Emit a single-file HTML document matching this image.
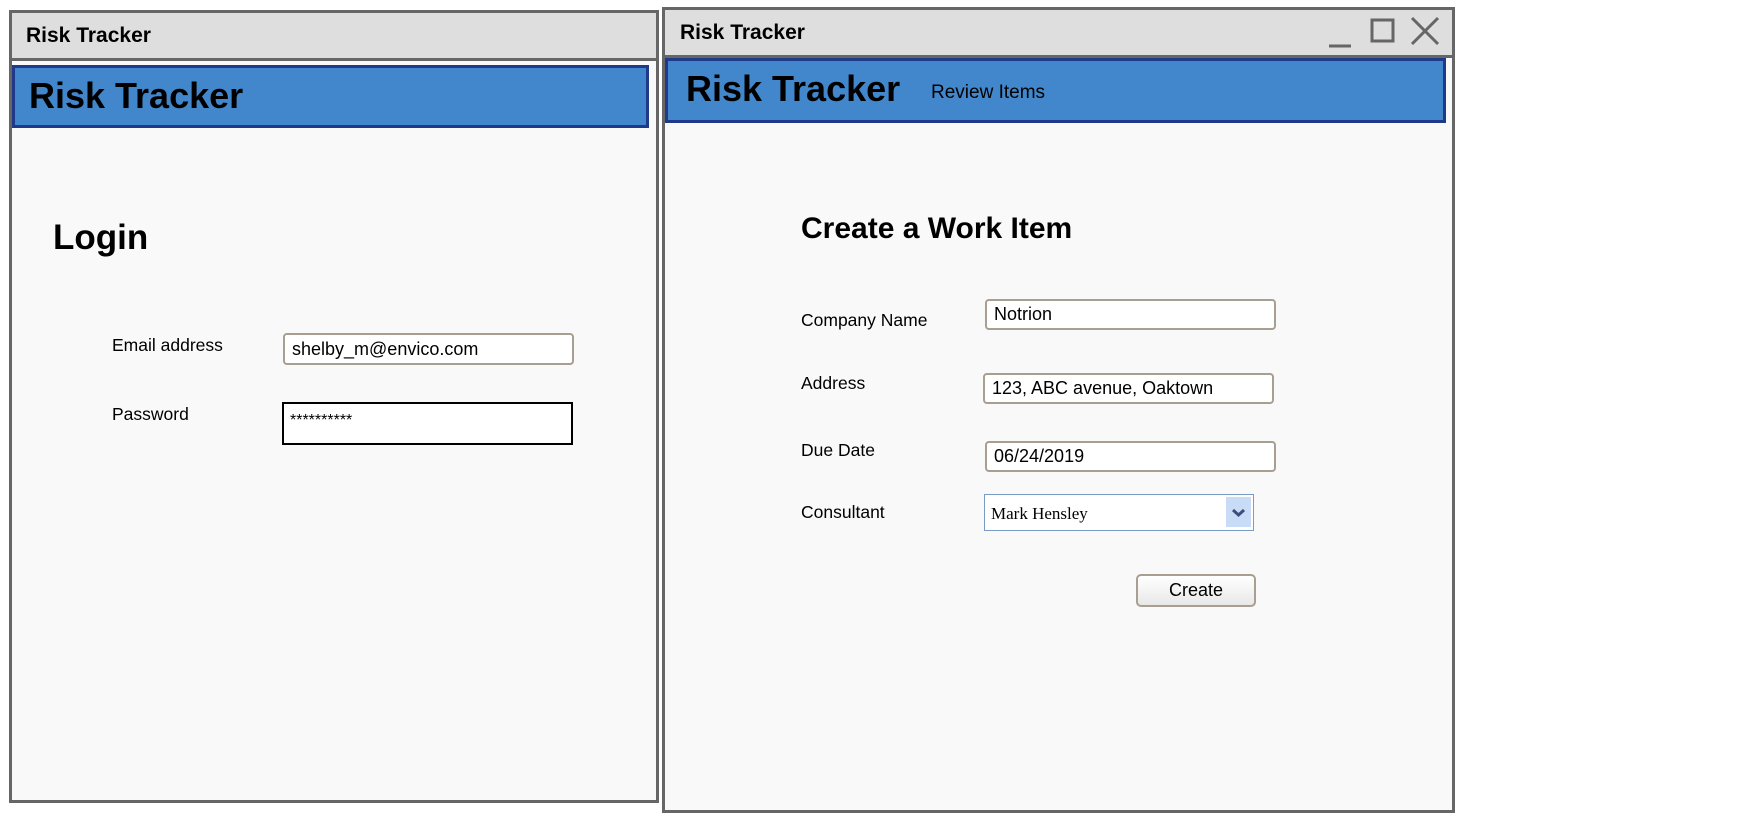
<!DOCTYPE html>
<html><head><meta charset="utf-8"><style>
*{box-sizing:border-box;margin:0;padding:0}
body{width:1737px;height:816px;background:#fff;position:relative;overflow:hidden;font-family:"Liberation Sans",sans-serif;color:#000}
.a{position:absolute}
.win{position:absolute;background:#f9f9f9;border:3px solid #666}
.tb{position:absolute;background:#dedede;border-bottom:3px solid #666;left:0;right:0;top:0}
.hd{position:absolute;background:#4287cb;border:3px solid #1f3a8a}
.inp{position:absolute;background:#fff;border:2px solid #a89e92;border-radius:4px;font-size:18px;padding-left:7px;display:flex;align-items:center}
.lbl{position:absolute;font-size:17.5px}
</style></head><body>
<div class="win" style="left:9px;top:10px;width:650px;height:793px">
 <div class="tb" style="height:48px"><div class="a" style="left:14px;top:11px;font-size:21px;font-weight:bold">Risk Tracker</div></div>
 <div class="hd" style="left:0;top:52px;width:637px;height:63px"><div class="a" style="left:14px;top:7px;font-size:36px;font-weight:bold">Risk Tracker</div></div>
 <div class="a" style="left:41px;top:205px;font-size:35px;font-weight:bold">Login</div>
 <div class="lbl" style="left:100px;top:322px">Email address</div>
 <div class="lbl" style="left:100px;top:391px">Password</div>
 <div class="inp" style="left:271px;top:320px;width:291px;height:32px">shelby_m@envico.com</div>
 <div class="a" style="left:270px;top:389px;width:291px;height:43px;background:#fff;border:2px solid #000;font-size:16px;padding:8px 0 0 6px">**********</div>
</div>
<div class="win" style="left:662px;top:7px;width:793px;height:806px">
 <div class="tb" style="height:48px"><div class="a" style="left:15px;top:11px;font-size:21px;font-weight:bold">Risk Tracker</div>
  <svg class="a" style="left:661px;top:4px" width="120" height="34" viewBox="0 0 120 34"><g stroke="#666" stroke-width="3" fill="none"><path d="M3 32H25"/><rect x="46" y="6" width="21" height="21"/><path d="M86 4L112 30M112 4L86 30"/></g></svg>
 </div>
 <div class="hd" style="left:0;top:48px;width:781px;height:65px"><div class="a" style="left:18px;top:7px;font-size:36px;font-weight:bold">Risk Tracker</div><div class="a" style="left:263px;top:21px;font-size:19px">Review Items</div></div>
 <div class="a" style="left:136px;top:202px;font-size:30px;font-weight:bold">Create a Work Item</div>
 <div class="lbl" style="left:136px;top:300px">Company Name</div>
 <div class="lbl" style="left:136px;top:363px">Address</div>
 <div class="lbl" style="left:136px;top:430px">Due Date</div>
 <div class="lbl" style="left:136px;top:492px">Consultant</div>
 <div class="inp" style="left:320px;top:289px;width:291px;height:31px">Notrion</div>
 <div class="inp" style="left:318px;top:363px;width:291px;height:31px">123, ABC avenue, Oaktown</div>
 <div class="inp" style="left:320px;top:431px;width:291px;height:31px">06/24/2019</div>
 <div class="a" style="left:319px;top:484px;width:270px;height:37px;background:#fff;border:1.5px solid #7a9cc4;font-family:'Liberation Serif',serif;font-size:17px;padding:9px 0 0 6px">Mark Hensley
  <div class="a" style="right:2px;top:2px;width:25px;height:30px;background:#c8dcf8"><svg width="25" height="30"><path d="M7 13L12.5 18L18 13" stroke="#3c4e7a" stroke-width="3" fill="none"/></svg></div>
 </div>
 <div class="a" style="left:471px;top:564px;width:120px;height:33px;border:2px solid #a89e92;border-radius:5px;background:linear-gradient(#fff,#e8e8e8);font-size:18px;text-align:center;line-height:29px">Create</div>
</div>
</body></html>
